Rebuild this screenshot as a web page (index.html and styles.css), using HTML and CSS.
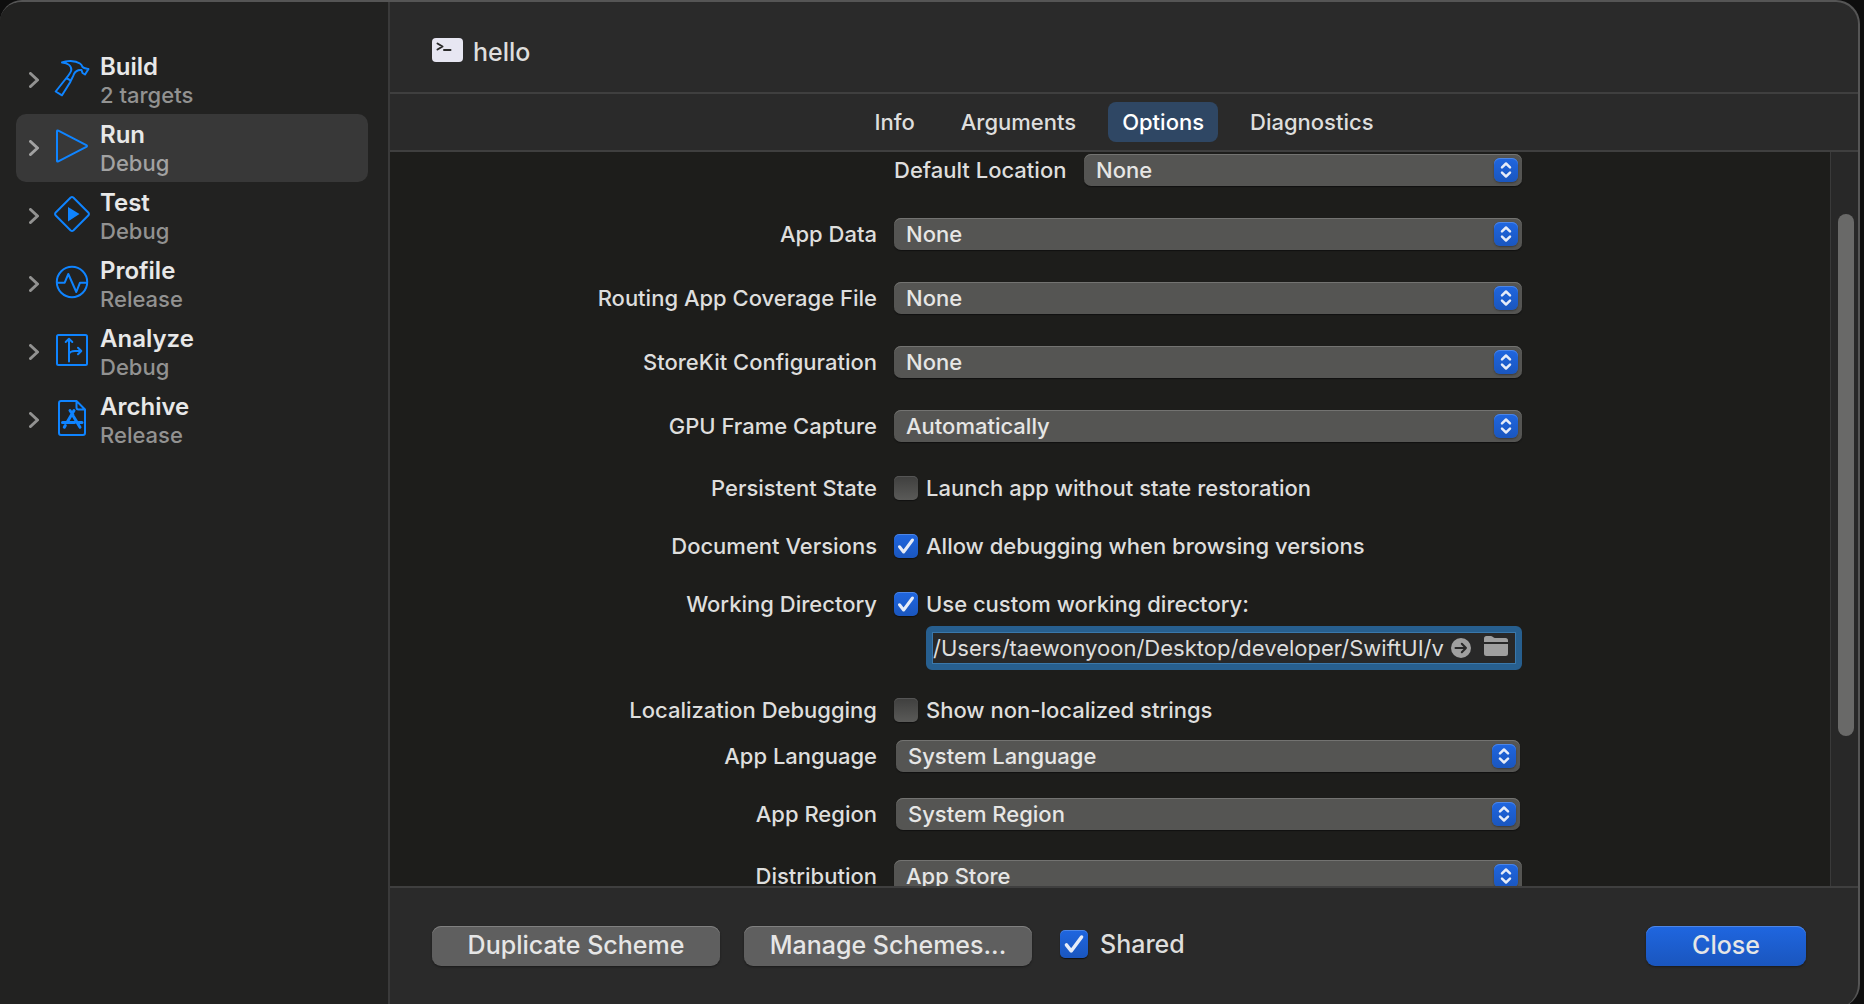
FILE: index.html
```html
<!DOCTYPE html>
<html lang="en">
<head>
    <meta charset="UTF-8">
    <meta name="viewport" content="width=device-width, initial-scale=1.0">
    <title>hello - Edit Scheme</title>
    <link rel="stylesheet" href="styles.css">
</head>
<body>
    <div class="window">
        <nav class="sidebar">
            <a class="action" href="#build">
                <svg class="chevron" viewBox="0 0 10 16"><path d="M1.5 1.5 8.5 8l-7 6.5"/></svg>
                <svg class="icon" viewBox="0 0 36 36"><path d="M8 2.5C12 .5 21 0 26 3.5c1.500 1 2 2 2.500 3.500 1.500 1.500 3.500 1.500 6 2l-3.500 5.500-2.500-1.500-1-3c-4-.5-6 1-7.500 4-1 3-2.500 5-4 8.500L8 35.300l-6.300-3.800L12 18.500c2-2.500 5-6 5.300-8.500.3-4-3.300-7-9.300-7.500zM12.500 18.200l3.500 2"/></svg>
                <span class="action-text"><strong>Build</strong><small>2 targets</small></span>
            </a>
            <a class="action selected" href="#run">
                <svg class="chevron" viewBox="0 0 10 16"><path d="M1.5 1.5 8.5 8l-7 6.5"/></svg>
                <svg class="icon" viewBox="0 0 36 36"><path d="M3 3.300v29.400q0 1.300 1.300.7l28-14.500q1.400-.9 0-1.800l-28-14.500Q3 2 3 3.300z"/></svg>
                <span class="action-text"><strong>Run</strong><small>Debug</small></span>
            </a>
            <a class="action" href="#test">
                <svg class="chevron" viewBox="0 0 10 16"><path d="M1.5 1.5 8.5 8l-7 6.5"/></svg>
                <svg class="icon" viewBox="0 0 36 36"><path d="M16.700 1.500q1.300-1 2.600 0l15.200 15.200q1 1.300 0 2.600L19.300 34.500q-1.300 1-2.600 0L1.500 19.300q-1-1.300 0-2.600z"/><path class="solid" d="M14 11v14.500L25.500 18z"/></svg>
                <span class="action-text"><strong>Test</strong><small>Debug</small></span>
            </a>
            <a class="action" href="#profile">
                <svg class="chevron" viewBox="0 0 10 16"><path d="M1.5 1.5 8.5 8l-7 6.5"/></svg>
                <svg class="icon" viewBox="0 0 36 36"><circle cx="18" cy="18" r="15.200"/><path d="M3 18.700h7.700L14.300 10l8 18L26 18.700h7"/></svg>
                <span class="action-text"><strong>Profile</strong><small>Release</small></span>
            </a>
            <a class="action" href="#analyze">
                <svg class="chevron" viewBox="0 0 10 16"><path d="M1.5 1.5 8.5 8l-7 6.5"/></svg>
                <svg class="icon" viewBox="0 0 36 36"><rect x="3" y="3" width="30" height="30" rx="1.500"/><path d="M15 29.500V7M11.700 10 15 6.700l3.300 3.300M15 22c1-2.500 3-3 6-3h6M24 15.700l3.300 3.300-3.300 3.300"/></svg>
                <span class="action-text"><strong>Analyze</strong><small>Debug</small></span>
            </a>
            <a class="action" href="#archive">
                <svg class="chevron" viewBox="0 0 10 16"><path d="M1.5 1.5 8.5 8l-7 6.5"/></svg>
                <svg class="icon" viewBox="0 0 36 36"><path d="M22.500 1H7a2 2 0 0 0-2 2v30a2 2 0 0 0 2 2h22a2 2 0 0 0 2-2V9.500zM22.500 1v6.500a2 2 0 0 0 2 2H31"/><path class="thick" d="M20 10.500 13.300 22M16 10.500l3 4.500M19.500 16.500 26 27.300M8.500 22.500h12M24.500 22.500H28M11.300 25.500l-1 1.800"/></svg>
                <span class="action-text"><strong>Archive</strong><small>Release</small></span>
            </a>
        </nav>

        <main class="main">
            <header class="header">
                <svg class="terminal" viewBox="0 0 31 24"><rect width="31" height="24" rx="4"/><path d="M5.500 5.500l5 3-5 3M12 12h6.500"/></svg>
                <span class="scheme-name">hello</span>
            </header>

            <div class="tabs">
                <button class="tab">Info</button>
                <button class="tab">Arguments</button>
                <button class="tab active">Options</button>
                <button class="tab">Diagnostics</button>
            </div>

            <div class="content">
                <form class="form">
                    <div class="section popups">
                        <div class="row">
                            <div class="controls location">
                                <label for="location">Default Location</label>
                                <div class="popup">
                                    <select id="location"><option>None</option></select>
                                    <svg class="arrows" viewBox="0 0 24 24"><path d="M8 9.300l4-3.800 4 3.800M8 14.700l4 3.800 4-3.800"/></svg>
                                </div>
                            </div>
                        </div>
                        <div class="row">
                            <label for="app-data">App Data</label>
                            <div class="popup">
                                <select id="app-data"><option>None</option></select>
                                <svg class="arrows" viewBox="0 0 24 24"><path d="M8 9.300l4-3.800 4 3.800M8 14.700l4 3.800 4-3.800"/></svg>
                            </div>
                        </div>
                        <div class="row">
                            <label for="routing">Routing App Coverage File</label>
                            <div class="popup">
                                <select id="routing"><option>None</option></select>
                                <svg class="arrows" viewBox="0 0 24 24"><path d="M8 9.300l4-3.800 4 3.800M8 14.700l4 3.800 4-3.800"/></svg>
                            </div>
                        </div>
                        <div class="row">
                            <label for="storekit">StoreKit Configuration</label>
                            <div class="popup">
                                <select id="storekit"><option>None</option></select>
                                <svg class="arrows" viewBox="0 0 24 24"><path d="M8 9.300l4-3.800 4 3.800M8 14.700l4 3.800 4-3.800"/></svg>
                            </div>
                        </div>
                        <div class="row">
                            <label for="gpu">GPU Frame Capture</label>
                            <div class="popup">
                                <select id="gpu"><option>Automatically</option></select>
                                <svg class="arrows" viewBox="0 0 24 24"><path d="M8 9.300l4-3.800 4 3.800M8 14.700l4 3.800 4-3.800"/></svg>
                            </div>
                        </div>
                    </div>

                    <div class="section checks">
                        <div class="row">
                            <span class="row-title">Persistent State</span>
                            <label class="check"><input type="checkbox">Launch app without state restoration</label>
                        </div>
                        <div class="row">
                            <span class="row-title">Document Versions</span>
                            <label class="check"><input type="checkbox" checked>Allow debugging when browsing versions</label>
                        </div>
                        <div class="row">
                            <span class="row-title">Working Directory</span>
                            <div class="directory">
                                <label class="check"><input type="checkbox" checked>Use custom working directory:</label>
                                <div class="path-field">
                                    <input type="text" aria-label="Working directory path" value="/Users/taewonyoon/Desktop/developer/SwiftUI/vapor/hello">
                                    <button type="button" class="reveal" aria-label="Reveal">
                                        <svg viewBox="0 0 20 20"><circle cx="10" cy="10" r="10"/><path d="M4.500 10h10.500M10.800 5.700 15 10l-4.200 4.300"/></svg>
                                    </button>
                                    <button type="button" class="browse" aria-label="Browse">
                                        <svg viewBox="0 0 24 20"><path d="M0 6V2.500Q0 0 2.500 0h4Q8 0 9 1t2 1h10.500Q24 2 24 4.500V6zM0 8h24v9.500q0 2.500-2.500 2.500h-19Q0 20 0 17.500z"/></svg>
                                    </button>
                                </div>
                            </div>
                        </div>
                    </div>

                    <div class="section locale">
                        <div class="row">
                            <span class="row-title">Localization Debugging</span>
                            <label class="check"><input type="checkbox">Show non-localized strings</label>
                        </div>
                    </div>

                    <div class="section language">
                        <div class="row">
                            <label for="language">App Language</label>
                            <div class="popup">
                                <select id="language"><option>System Language</option></select>
                                <svg class="arrows" viewBox="0 0 24 24"><path d="M8 9.300l4-3.800 4 3.800M8 14.700l4 3.800 4-3.800"/></svg>
                            </div>
                        </div>
                        <div class="row">
                            <label for="region">App Region</label>
                            <div class="popup">
                                <select id="region"><option>System Region</option></select>
                                <svg class="arrows" viewBox="0 0 24 24"><path d="M8 9.300l4-3.800 4 3.800M8 14.700l4 3.800 4-3.800"/></svg>
                            </div>
                        </div>
                    </div>

                    <div class="section">
                        <div class="row">
                            <label for="distribution">Distribution</label>
                            <div class="popup">
                                <select id="distribution"><option>App Store</option></select>
                                <svg class="arrows" viewBox="0 0 24 24"><path d="M8 9.300l4-3.800 4 3.800M8 14.700l4 3.800 4-3.800"/></svg>
                            </div>
                        </div>
                    </div>
                </form>
                <div class="scrollbar"><div class="thumb"></div></div>
            </div>

            <footer class="footer">
                <button class="btn">Duplicate Scheme</button>
                <button class="btn">Manage Schemes...</button>
                <label class="check shared"><input type="checkbox" checked>Shared</label>
                <button class="btn primary">Close</button>
            </footer>
        </main>
    </div>
</body>
</html>
```

FILE: styles.css
```css
* {
    margin: 0;
    padding: 0;
    box-sizing: border-box;
}

body {
    font-family: Inter, 'Liberation Sans', sans-serif;
    font-size: 22px;
    font-weight: 450;
    line-height: 28px;
    color: #dededd;
    background: #0e0e0e;
    overflow: hidden;
}

button, select, input {
    font: inherit;
    color: inherit;
    border: none;
    background: none;
}

svg {
    display: block;
    fill: none;
    stroke-linecap: round;
    stroke-linejoin: round;
}

/* the sheet runs a little past the bottom of the screen */
.window {
    display: flex;
    height: calc(100vh + 4px);
    margin-right: 4px;
    border: 2px solid #555;
    border-width: 2px 2px 0 0;
    border-radius: 22px 24px 24px 0;
    background: #2a2a2a;
    overflow: hidden;
}

/* Sidebar */
.sidebar {
    flex: 0 0 390px;
    padding: 44px 20px 0 16px;
    background: #222221;
    border-right: 2px solid #3a3a3a;
}

.action {
    display: flex;
    align-items: center;
    height: 68px;
    padding-left: 13px;
    border-radius: 10px;
    color: #929291;
    text-decoration: none;
}

.action.selected {
    background: #383838;
    color: #a2a2a2;
}

.chevron {
    width: 10px;
    height: 16px;
    stroke: currentColor;
    stroke-width: 3;
}

.icon {
    width: 36px;
    height: 36px;
    margin: 0 10px 4px 15px;
    overflow: visible;
    stroke: #0f84ff;
    stroke-width: 2;
}

.icon .solid {
    fill: #0f84ff;
    stroke: none;
}

.icon .thick {
    stroke-width: 3;
}

.action-text {
    padding-top: 2px;
}

.action-text strong,
.action-text small {
    display: block;
    font-size: 22px;
}

.action-text strong {
    font-size: 24px;
    font-weight: 600;
    color: #e8e8e8;
}

/* Main area */
.main {
    display: flex;
    flex: 1;
    flex-direction: column;
    min-width: 0;
}

.header {
    display: flex;
    align-items: center;
    gap: 10px;
    height: 92px;
    padding: 6px 42px 0;
    border-bottom: 2px solid #3f3f3f;
    font-size: 25px;
}

.scheme-name {
    padding-top: 4px;
}

.terminal {
    width: 31px;
    height: 24px;
    stroke: #2a2a2a;
    stroke-width: 2;
}

.terminal rect {
    fill: #e7e6f2;
    stroke: none;
}

.tabs {
    display: flex;
    justify-content: center;
    align-items: center;
    gap: 18px;
    height: 58px;
    border-bottom: 2px solid #3f3f3f;
}

.tab {
    height: 40px;
    padding: 0 14px;
    border-radius: 8px;
}

.tab.active {
    background: #2f4764;
    color: #fff;
    font-weight: 500;
}

.content {
    display: flex;
    flex: 1;
    min-height: 0;
    background: #1d1d1b;
    overflow: hidden;
}

.form {
    flex: 1;
    padding: 2px 308px 0 0;
}

.section {
    display: flex;
    flex-direction: column;
    gap: 26px;
    margin-bottom: 30px;
}

.section.popups {
    gap: 32px;
}

.section.checks {
    margin-bottom: 24px;
}

.section.locale {
    margin-bottom: 14px;
}

.section.language .popup {
    margin: 0 2px;
}

.row {
    display: grid;
    grid-template-columns: 1fr 628px;
    column-gap: 17px;
    line-height: 32px;
}

.row > label:first-child,
.row-title {
    text-align: right;
}

.location {
    display: flex;
    grid-column: 2;
    justify-content: space-between;
}

.location .popup {
    width: 438px;
}

.popup {
    position: relative;
}

.popup select {
    display: block;
    width: 100%;
    height: 32px;
    padding: 0 40px 0 12px;
    border-radius: 7px;
    background: #555553;
    box-shadow: inset 0 1px 0 #737371, 0 1px 1px #111;
    color: #e6e6e5;
    appearance: none;
}

.arrows {
    position: absolute;
    top: 4px;
    right: 4px;
    width: 24px;
    height: 24px;
    border-radius: 6px;
    background: linear-gradient(#1f66e0, #1a56be);
    box-shadow: inset 0 1px 0 #4d86e6, 0 1px 2px #3a3a3a;
    stroke: #e6ecf8;
    stroke-width: 2.5;
    pointer-events: none;
}

.check {
    display: flex;
    align-items: center;
    gap: 8px;
}

.check input {
    width: 24px;
    height: 24px;
    border-radius: 5px;
    background: linear-gradient(#3f3f3e, #5a5a58);
    box-shadow: inset 0 1px 0 #555, 0 1px 1px #111;
    appearance: none;
}

.check input:checked {
    background: url("data:image/svg+xml,%3Csvg xmlns='http://www.w3.org/2000/svg' viewBox='0 0 24 24'%3E%3Cpath d='M5.500 12.800 9.600 18 18.500 6' fill='none' stroke='%23e6ecf8' stroke-width='3' stroke-linecap='round' stroke-linejoin='round'/%3E%3C/svg%3E"), linear-gradient(#1f66e0, #1a56be);
    box-shadow: inset 0 1px 0 #4d86e6, 0 1px 1px #111;
}

.path-field {
    display: flex;
    align-items: center;
    height: 44px;
    margin: 6px 0 0 32px;
    padding: 0 8px 0 1px;
    border: 6px solid #275f8f;
    border-radius: 6px;
    background: #282828;
    box-shadow: inset 0 0 0 1px #3a78ab;
}

.path-field input {
    flex: 1;
    min-width: 0;
    height: 28px;
    font-weight: 400;
    outline: none;
}

.path-field svg {
    fill: #9f9f9f;
}

.reveal {
    width: 20px;
    margin: 0 13px 0 7px;
}

.reveal path {
    fill: none;
    stroke: #282828;
    stroke-width: 2;
}

.browse {
    width: 24px;
    padding-bottom: 4px;
}

.scrollbar {
    width: 28px;
    padding: 62px 4px 0 7px;
    border-left: 1px solid #3a3a3a;
    background: #282828;
}

.thumb {
    height: 522px;
    border-radius: 8px;
    background: #696968;
}

/* Footer */
.footer {
    display: flex;
    align-items: center;
    gap: 24px;
    height: 122px;
    padding: 0 52px 4px 42px;
    border-top: 2px solid #3f3f3f;
    font-size: 25px;
}

.btn {
    width: 288px;
    height: 40px;
    padding-bottom: 2px;
    border-radius: 9px;
    background: #5f5f5f;
    box-shadow: inset 0 1px 0 #808080, 0 1px 2px #1a1a1a;
    color: #e6e6e6;
}

.btn.primary {
    width: 160px;
    margin-left: auto;
    background: linear-gradient(#1f66e0, #1a56be);
    box-shadow: inset 0 1px 0 #4d86e6, 0 1px 2px #1a1a1a;
}

.shared {
    gap: 12px;
    margin: 0 0 4px 4px;
}

.shared input {
    width: 28px;
    height: 28px;
}
```
